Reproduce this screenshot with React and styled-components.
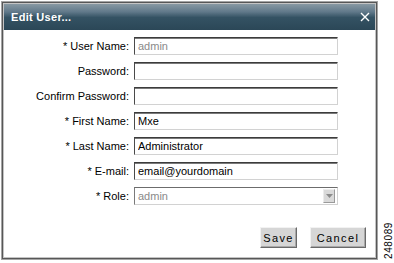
import React from "react";
import styled, { createGlobalStyle } from "styled-components";

const GlobalStyle = createGlobalStyle`
  html, body {
    margin: 0;
    padding: 0;
    background: #ffffff;
  }
  body {
    font-family: "Liberation Sans", Arial, sans-serif;
  }
`;

const Page = styled.div`
  display: flex;
  align-items: stretch;
  width: 394px;
  height: 263px;
  padding: 1px 0 0 1px;
  box-sizing: border-box;
`;

const Dialog = styled.div`
  width: 377px;
  height: 259px;
  box-sizing: border-box;
  display: flex;
  flex-direction: column;
  border: 1px solid #a4a4a4;
  padding: 2px;
  background: #ffffff;
  box-shadow: inset 0 0 0 1px #575757, inset 0 0 0 2px #c4c4c4;
`;

const TitleBar = styled.div`
  height: 26px;
  display: flex;
  align-items: center;
  justify-content: space-between;
  padding: 0 5px 0 7px;
  background: linear-gradient(
    to bottom,
    #8899a3 0%,
    #61798a 30%,
    #345263 52%,
    #2b4757 100%
  );
`;

const Title = styled.span`
  color: #ffffff;
  font-size: 11px;
  font-weight: bold;
  letter-spacing: 0.3px;
`;

const CloseButton = styled.button`
  width: 11px;
  height: 11px;
  padding: 0;
  border: none;
  background: none;
  display: flex;
  align-items: center;
  justify-content: center;
  cursor: pointer;
`;

const Body = styled.div`
  flex: 1;
  display: flex;
  flex-direction: column;
  padding: 7px 9px 9px 0;
`;

const Form = styled.div`
  display: grid;
  grid-template-columns: 125px 204px;
  column-gap: 5px;
  row-gap: 7px;
  align-items: center;
`;

const Label = styled.label`
  text-align: right;
  font-size: 11px;
  color: #000000;
  white-space: nowrap;
`;

const Input = styled.input`
  height: 18px;
  box-sizing: border-box;
  margin: 0;
  padding: 0 3px;
  font-family: "Liberation Sans", Arial, sans-serif;
  font-size: 11px;
  color: ${(p) => (p.disabled ? "#8a8a8a" : "#000000")};
  background: #ffffff;
  border: 1px solid;
  border-color: #3c3c3c #d2d2d2 #d2d2d2 #4a4a4a;
  box-shadow: inset 0 1px 0 #7a7a7a;
  outline: none;
`;

const Select = styled.div`
  height: 18px;
  box-sizing: border-box;
  display: flex;
  align-items: center;
  justify-content: space-between;
  padding: 0 2px 0 3px;
  font-size: 11px;
  color: #8a8a8a;
  border: 1px solid;
  border-color: #6c6c6c #d2d2d2 #d2d2d2 #7a7a7a;
`;

const Arrow = styled.span`
  width: 12px;
  height: 14px;
  box-sizing: border-box;
  display: flex;
  align-items: center;
  justify-content: center;
  background: #d9d9d9;
  border: 1px solid;
  border-color: #ececec #9a9a9a #9a9a9a #ececec;
`;

const Footer = styled.div`
  margin-top: auto;
  display: flex;
  justify-content: flex-end;
  gap: 13px;
`;

const Button = styled.button`
  height: 21px;
  width: ${(p) => p.w}px;
  box-sizing: border-box;
  margin: 0;
  padding: 0;
  font-family: "Liberation Sans", Arial, sans-serif;
  font-size: 11px;
  letter-spacing: 1.4px;
  color: #000000;
  background: #d6d6d6;
  border: 1px solid;
  border-color: #f2f2f2 #6a6a6a #6a6a6a #f2f2f2;
  box-shadow: inset -1px -1px 0 #a8a8a8;
  cursor: pointer;
`;

const Side = styled.div`
  flex: 1;
  display: flex;
  flex-direction: column;
  justify-content: flex-end;
  align-items: center;
  padding-bottom: 4px;
  padding-left: 4px;
`;

const FigureNumber = styled.span`
  writing-mode: vertical-rl;
  transform: rotate(180deg);
  font-size: 10px;
  letter-spacing: 0.6px;
  color: #000000;
`;

const fields = [
  { label: "* User Name:", value: "admin", disabled: true },
  { label: "Password:", value: "" },
  { label: "Confirm Password:", value: "" },
  { label: "* First Name:", value: "Mxe" },
  { label: "* Last Name:", value: "Administrator" },
  { label: "* E-mail:", value: "email@yourdomain" },
];

export default function App() {
  return (
    <>
      <GlobalStyle />
      <Page>
        <Dialog>
          <TitleBar>
            <Title>Edit User...</Title>
            <CloseButton aria-label="Close">
              <svg width="10" height="10" viewBox="0 0 10 10">
                <path
                  d="M1 1 L9 9 M9 1 L1 9"
                  stroke="#ffffff"
                  strokeWidth="1.4"
                  fill="none"
                />
              </svg>
            </CloseButton>
          </TitleBar>
          <Body>
            <Form>
              {fields.map((f) => (
                <React.Fragment key={f.label}>
                  <Label>{f.label}</Label>
                  <Input
                    defaultValue={f.value}
                    disabled={f.disabled}
                    type={f.label.includes("Password") ? "password" : "text"}
                  />
                </React.Fragment>
              ))}
              <Label>* Role:</Label>
              <Select>
                <span>admin</span>
                <Arrow>
                  <svg width="7" height="4" viewBox="0 0 7 4">
                    <path d="M0 0 L7 0 L3.5 4 Z" fill="#8c8c8c" />
                  </svg>
                </Arrow>
              </Select>
            </Form>
            <Footer>
              <Button w={37}>Save</Button>
              <Button w={56}>Cancel</Button>
            </Footer>
          </Body>
        </Dialog>
        <Side>
          <FigureNumber>248089</FigureNumber>
        </Side>
      </Page>
    </>
  );
}
